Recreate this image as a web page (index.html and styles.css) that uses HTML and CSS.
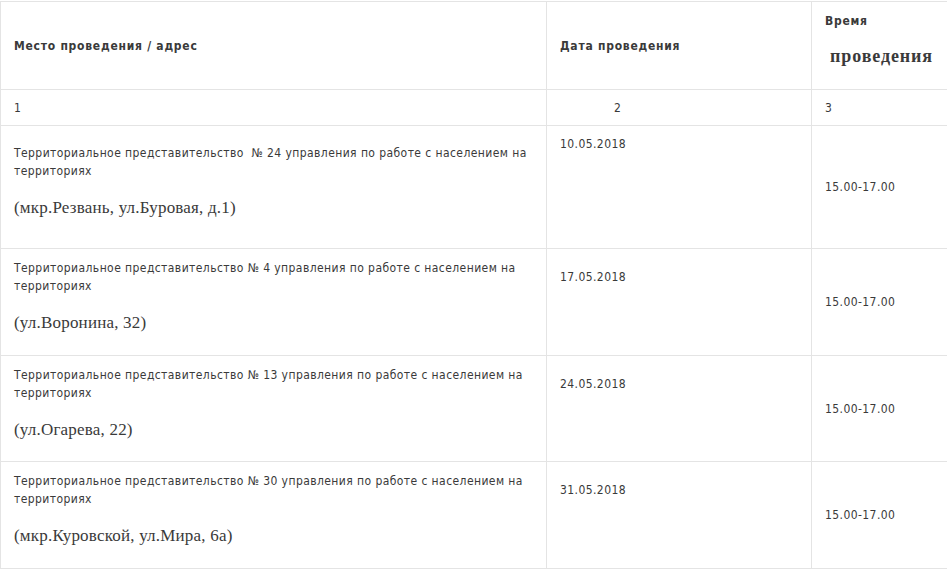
FILE: index.html
```html
<!DOCTYPE html>
<html lang="ru">
<head>
<meta charset="utf-8">
<title>График приёма</title>
<link rel="stylesheet" href="styles.css">
</head>
<body>
<table class="schedule">
  <colgroup>
    <col class="col-place">
    <col class="col-date">
    <col class="col-time">
  </colgroup>
  <thead>
    <tr class="row-head">
      <th class="cell-head">Место проведения / адрес</th>
      <th class="cell-head">Дата проведения</th>
      <th class="cell-head cell-head-time">
        <p class="head-line">Время</p>
        <p class="head-serif">проведения</p>
      </th>
    </tr>
    <tr class="row-num">
      <td class="cell-num">1</td>
      <td class="cell-num cell-num-center">2</td>
      <td class="cell-num">3</td>
    </tr>
  </thead>
  <tbody>
    <tr class="row-item row-first">
      <td class="cell-place">
        <p class="desc">Территориальное представительство&nbsp; № 24 управления по работе с населением на территориях</p>
        <p class="addr">(мкр.Резвань, ул.Буровая, д.1)</p>
      </td>
      <td class="cell-date">10.05.2018</td>
      <td class="cell-time">15.00-17.00</td>
    </tr>
    <tr class="row-item">
      <td class="cell-place">
        <p class="desc">Территориальное представительство № 4 управления по работе с населением на территориях</p>
        <p class="addr">(ул.Воронина, 32)</p>
      </td>
      <td class="cell-date">17.05.2018</td>
      <td class="cell-time">15.00-17.00</td>
    </tr>
    <tr class="row-item row-short">
      <td class="cell-place">
        <p class="desc">Территориальное представительство № 13 управления по работе с населением на территориях</p>
        <p class="addr">(ул.Огарева, 22)</p>
      </td>
      <td class="cell-date">24.05.2018</td>
      <td class="cell-time">15.00-17.00</td>
    </tr>
    <tr class="row-item">
      <td class="cell-place">
        <p class="desc">Территориальное представительство № 30 управления по работе с населением на территориях</p>
        <p class="addr">(мкр.Куровской, ул.Мира, 6а)</p>
      </td>
      <td class="cell-date">31.05.2018</td>
      <td class="cell-time">15.00-17.00</td>
    </tr>
  </tbody>
</table>
</body>
</html>
```

FILE: styles.css
```css
html, body {
  margin: 0;
  padding: 0;
  background: #ffffff;
}

body {
  padding-top: 1px;
  font-family: "DejaVu Sans Condensed", "DejaVu Sans", sans-serif;
  font-size: 12px;
  line-height: 18px;
  letter-spacing: 0.42px;
  color: #3a3a3a;
}

.schedule {
  border-collapse: collapse;
  width: 948px;
  table-layout: fixed;
}

.col-place { width: 546px; }
.col-date { width: 265px; }
.col-time { width: 137px; }

.schedule th,
.schedule td {
  border: 1px solid #e4e4e4;
  padding: 0 13px;
  text-align: left;
}

.schedule tr > :last-child {
  border-right: none;
}

.row-head { height: 88px; }
.row-num { height: 36px; }
.row-item { height: 107px; }
.row-first { height: 123px; }
.row-short { height: 106px; }

.schedule .cell-head {
  font-weight: bold;
  letter-spacing: 0.75px;
  vertical-align: middle;
}

.schedule .cell-head-time {
  vertical-align: top;
  padding-top: 10px;
}

.head-line {
  margin: 0;
}

.head-serif {
  margin: 16px 0 0;
  padding-left: 5px;
  font-family: "Liberation Serif", "DejaVu Serif", serif;
  font-size: 18px;
  line-height: 20px;
  letter-spacing: 0.9px;
}

.schedule .cell-num {
  vertical-align: middle;
}

.schedule .cell-num-center {
  padding-left: 67px;
}

.schedule .cell-place {
  vertical-align: top;
  padding-top: 10px;
}

.schedule .row-first .cell-place {
  padding-top: 18px;
}

.desc {
  margin: 0;
}

.addr {
  margin: 18px 0 0;
  font-family: "Liberation Serif", "DejaVu Serif", serif;
  font-size: 17px;
  line-height: 20px;
  letter-spacing: 0.2px;
}

.schedule .cell-date {
  vertical-align: top;
  padding-top: 19px;
}

.schedule .row-first .cell-date {
  padding-top: 9px;
}

.schedule .cell-time {
  vertical-align: middle;
}
```
